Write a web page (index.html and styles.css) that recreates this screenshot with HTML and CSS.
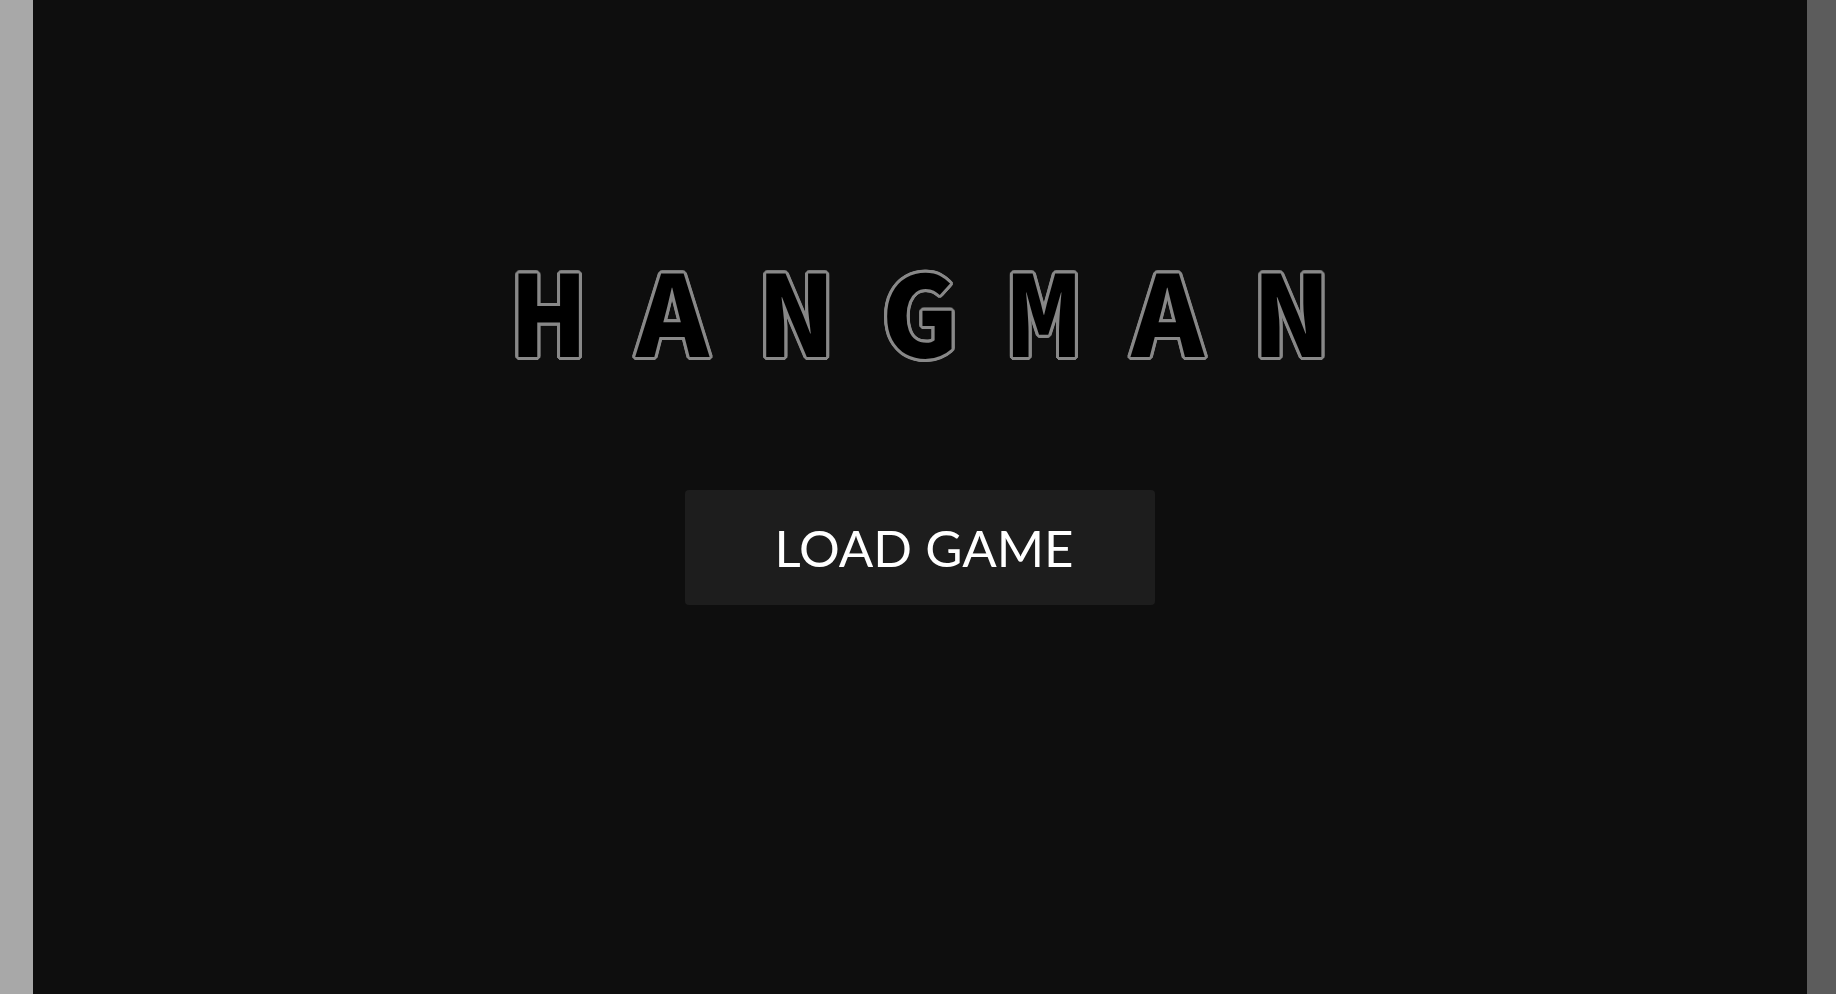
FILE: index.html
```html
<!DOCTYPE html>
<html lang="en">
<head>
  <meta charset="UTF-8">
  <meta name="viewport" content="width=device-width, initial-scale=1.0">
  <title>Hangman</title>
  <link rel="stylesheet" href="styles.css">
</head>
<body>
  <main class="start-screen">
    <h1 class="title">HANGMAN</h1>
    <button class="load-button" type="button">LOAD GAME</button>
  </main>
</body>
</html>
```

FILE: styles.css
```css
* {
  box-sizing: border-box;
}
body {
  margin: 0;
  background: #0e0e0e;
}
.start-screen {
  min-height: 100vh;
  display: flex;
  flex-direction: column;
  align-items: center;
  gap: 98px;
  padding-top: 232px;
  border-left: 33px solid #a8a8a8;
  border-right: 29px solid #5c5c5c;
}
.title {
  margin: 0;
  padding-left: 47px;
  font-family: "Source Code Pro", "Noto Sans Mono CJK SC", "DejaVu Sans Mono", monospace;
  font-size: 128px;
  font-weight: bold;
  line-height: 160px;
  letter-spacing: 47px;
  color: #000;
  /* outline with rounded corners */
  text-shadow:
    3px 0 #888, -3px 0 #888, 0 3px #888, 0 -3px #888,
    3px 1px #888, 3px -1px #888, -3px 1px #888, -3px -1px #888,
    1px 3px #888, 1px -3px #888, -1px 3px #888, -1px -3px #888,
    2px 2px #888, 2px -2px #888, -2px 2px #888, -2px -2px #888;
}
.load-button {
  padding: 28px 80px 28px 88px;
  min-width: 470px;
  border: none;
  border-radius: 4px;
  background: #1d1d1d;
  color: #fff;
  font-family: Lato, sans-serif;
  font-size: 51px;
  line-height: 59px;
}
.load-button:hover {
  background: #2a2a2a;
}
```
